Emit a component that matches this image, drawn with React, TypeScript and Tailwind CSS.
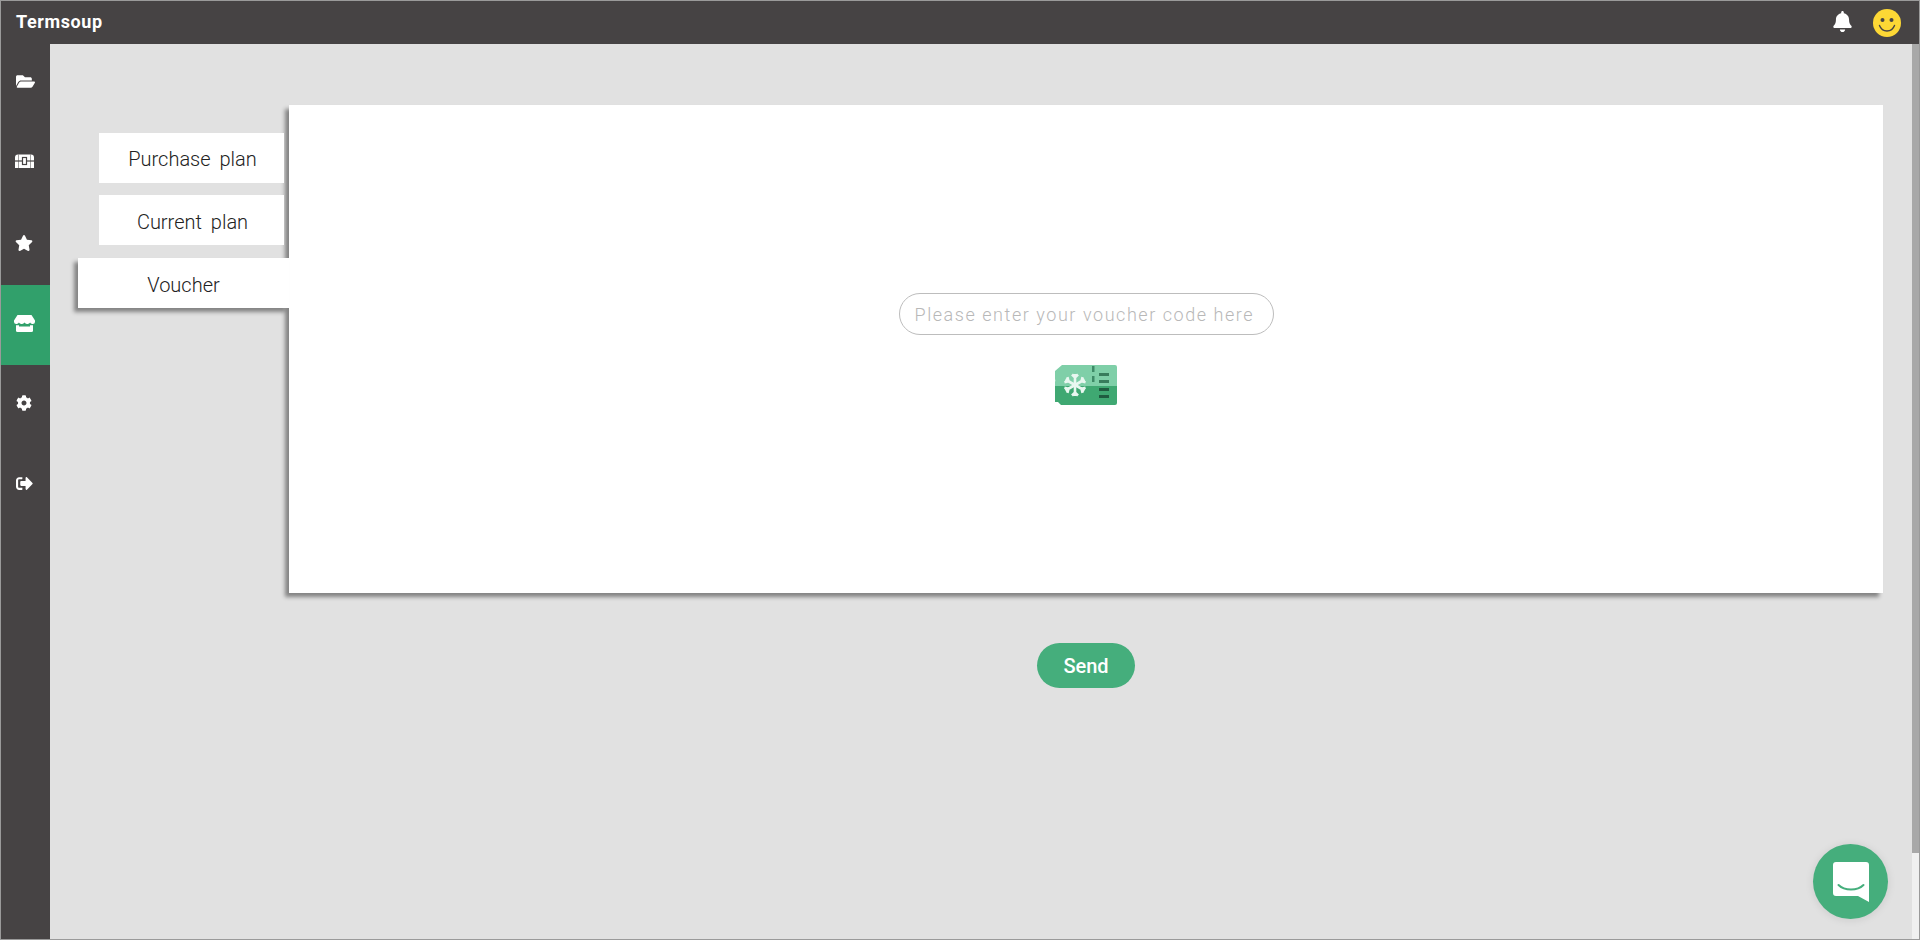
import React from "react";
import { FaFolderOpen, FaStar, FaCog, FaSignOutAlt, FaBell } from "react-icons/fa";

function Chest() {
  return (
    <svg width="21" height="14" viewBox="0 0 21 14">
      <path d="M1 3.500a3 3 0 0 1 3-3h13a3 3 0 0 1 3 3V14H1z" fill="white" />
      <path d="M0 7h21" stroke="#464344" strokeWidth="1.200" />
      <path d="M4.500 .5V14M16.500 .5V14" stroke="#464344" strokeWidth="1" opacity="0.5" />
      <rect x="8.500" y="3.500" width="4" height="7" fill="white" stroke="#464344" strokeWidth="1.200" />
    </svg>
  );
}

function Store() {
  return (
    <svg width="21" height="17" viewBox="0 0 21 17" fill="white">
      <path d="M3.500 0h14L21 5.500V7a2.200 2.200 0 0 1-2.200 2 2.500 2.500 0 0 1-2.700-1.400A2.800 2.800 0 0 1 13.300 9a2.900 2.900 0 0 1-2.800-1.400A2.900 2.900 0 0 1 7.700 9a2.800 2.800 0 0 1-2.800-1.400A2.500 2.500 0 0 1 2.200 9 2.200 2.200 0 0 1 0 7V5.500z" />
      <path d="M2 10.200h17V15.500a1.500 1.500 0 0 1-1.500 1.500h-14A1.500 1.500 0 0 1 2 15.500z" />
      <rect x="5" y="9.500" width="11" height="2" fill="#31a06b" />
    </svg>
  );
}

function Smiley() {
  return (
    <svg width="28" height="28" viewBox="0 0 28 28">
      <circle cx="14" cy="14" r="14" fill="#fdd835" />
      <circle cx="9.500" cy="11" r="2" fill="#464344" />
      <circle cx="18.500" cy="11" r="2" fill="#464344" />
      <path d="M6.500 16.500c1.500 4 4.500 5.500 7.500 5.500s6-1.500 7.500-5.500" fill="none" stroke="#464344" strokeWidth="1.400" strokeLinecap="round" />
    </svg>
  );
}

function Ticket() {
  const arms = [0, 60, 120, 180, 240, 300];
  return (
    <svg width="62" height="40" viewBox="0 0 62 40">
      <path d="M7 0h53a2 2 0 0 1 2 2v19H0v-4a4 4 0 0 0 0-3V6z" fill="#7fcfa8" />
      <path d="M0 21h62v17a2 2 0 0 1-2 2H6l-3-3H0z" fill="#3fa872" />
      <g fill="#2f7a58" opacity="0.8">
        <rect x="37" y="1" width="2.500" height="6" />
        <rect x="37" y="11" width="2.500" height="6" />
      </g>
      <g fill="#2c6e4f" opacity="0.85">
        <rect x="44" y="8" width="10" height="3" />
        <rect x="44" y="15" width="10" height="3" />
      </g>
      <g fill="#1f5c40">
        <rect x="44" y="23" width="10" height="3" />
        <rect x="44" y="30" width="10" height="3" />
      </g>
      <g transform="translate(20 20)" stroke="#e9f7f0" fill="none" strokeWidth="2.600">
        {arms.map((a) => (
          <g key={a} transform={`rotate(${a})`}>
            <path d="M0 0V-11M-3 -10.500L0 -7.500L3 -10.500" />
          </g>
        ))}
      </g>
    </svg>
  );
}

function ChatIcon() {
  return (
    <svg width="36" height="40" viewBox="0 0 36 40">
      <path d="M3 0h30a3 3 0 0 1 3 3v37l-11-6H3a3 3 0 0 1-3-3V3a3 3 0 0 1 3-3z" fill="white" />
      <path d="M5.500 23c3 3 7.500 4.500 12.500 4.500S27.500 26 30.500 23" fill="none" stroke="#45ae7c" strokeWidth="2" strokeLinecap="round" />
    </svg>
  );
}

export default function App() {
  return (
    <div className="relative flex h-[940px] w-full flex-col overflow-hidden border border-[#9a9a9a] bg-[#e1e1e1] font-['Roboto',sans-serif]">
      <header className="flex h-[43px] shrink-0 items-center justify-between bg-[#464344] pl-[15px] pr-[12px]">
        <span className="pb-[2px] text-[18px] font-bold tracking-[0.6px] text-white">Termsoup</span>
        <div className="flex items-center gap-[20px] pr-[6px]">
          <span className="pb-[2px]">
            <FaBell size={21} color="white" />
          </span>
          <Smiley />
        </div>
      </header>
      <div className="flex min-h-0 flex-1">
        <nav className="w-[49px] shrink-0 bg-[#464344] pt-[1px]">
          <div className="flex h-[80px] items-center justify-center pb-[8px] pr-[1px]">
            <FaFolderOpen size={19} color="white" />
          </div>
          <div className="flex h-[80px] items-center justify-center pb-[8px] pr-[3px]">
            <Chest />
          </div>
          <div className="flex h-[80px] items-center justify-center pb-[4px] pr-[3px]">
            <FaStar size={18} color="white" />
          </div>
          <div className="flex h-[80px] items-center justify-center bg-[#31a06b] pb-[4px] pr-[3px]">
            <Store />
          </div>
          <div className="flex h-[80px] items-center justify-center pb-[4px] pr-[3px]">
            <FaCog size={16} color="white" />
          </div>
          <div className="flex h-[80px] items-center justify-center pb-[4px] pr-[3px]">
            <FaSignOutAlt size={17} color="white" />
          </div>
        </nav>
        <main className="flex min-w-0 flex-1 flex-col items-start pl-[28px] pt-[61px]">
          <div className="flex items-start">
            <div className="relative z-10 flex w-[211px] flex-col items-end pt-[28px]">
              <button className="mr-[5px] flex h-[50px] w-[185px] items-center justify-center bg-white pl-[2px] pt-[2px] text-[20px] font-light text-[#222] [word-spacing:4px]">
                Purchase plan
              </button>
              <button className="mr-[5px] mt-[12px] flex h-[50px] w-[185px] items-center justify-center bg-white pl-[2px] pt-[4px] text-[20px] font-light text-[#222] [word-spacing:4px]">
                Current plan
              </button>
              <button className="mt-[13px] flex h-[50px] w-[211px] items-center justify-center bg-white pt-[3px] text-[20px] font-light text-[#222] shadow-[-4px_4px_4px_rgba(0,0,0,0.42)]">
                Voucher
              </button>
            </div>
            <section className="flex h-[488px] w-[1594px] flex-col items-center bg-white pt-[188px] shadow-[-4px_4px_4px_rgba(0,0,0,0.42)]">
              <input
                readOnly
                placeholder="Please enter your voucher code here"
                className="h-[42px] w-[375px] rounded-full border border-[#bdbdbd] bg-white px-[15px] text-[18px] font-light tracking-[1.55px] outline-none placeholder:text-[#b8b8b8]"
              />
              <div className="mt-[30px]">
                <Ticket />
              </div>
            </section>
          </div>
          <div className="flex w-[1805px] justify-center pl-[211px] pt-[50px]">
            <button className="flex h-[45px] w-[98px] items-center justify-center rounded-full bg-[#45ae7c] text-[20px] font-medium text-white">
              Send
            </button>
          </div>
        </main>
        <div className="w-[7px] shrink-0 self-stretch bg-[#f0f0f0]">
          <div className="h-[809px] w-full bg-[#a8a8a8]" />
        </div>
      </div>
      <div className="absolute left-[1812px] top-[843px] flex h-[75px] w-[75px] items-center justify-center rounded-full bg-[#45ae7c] shadow-[0_1px_8px_rgba(0,0,0,0.1)]">
        <ChatIcon />
      </div>
    </div>
  );
}
